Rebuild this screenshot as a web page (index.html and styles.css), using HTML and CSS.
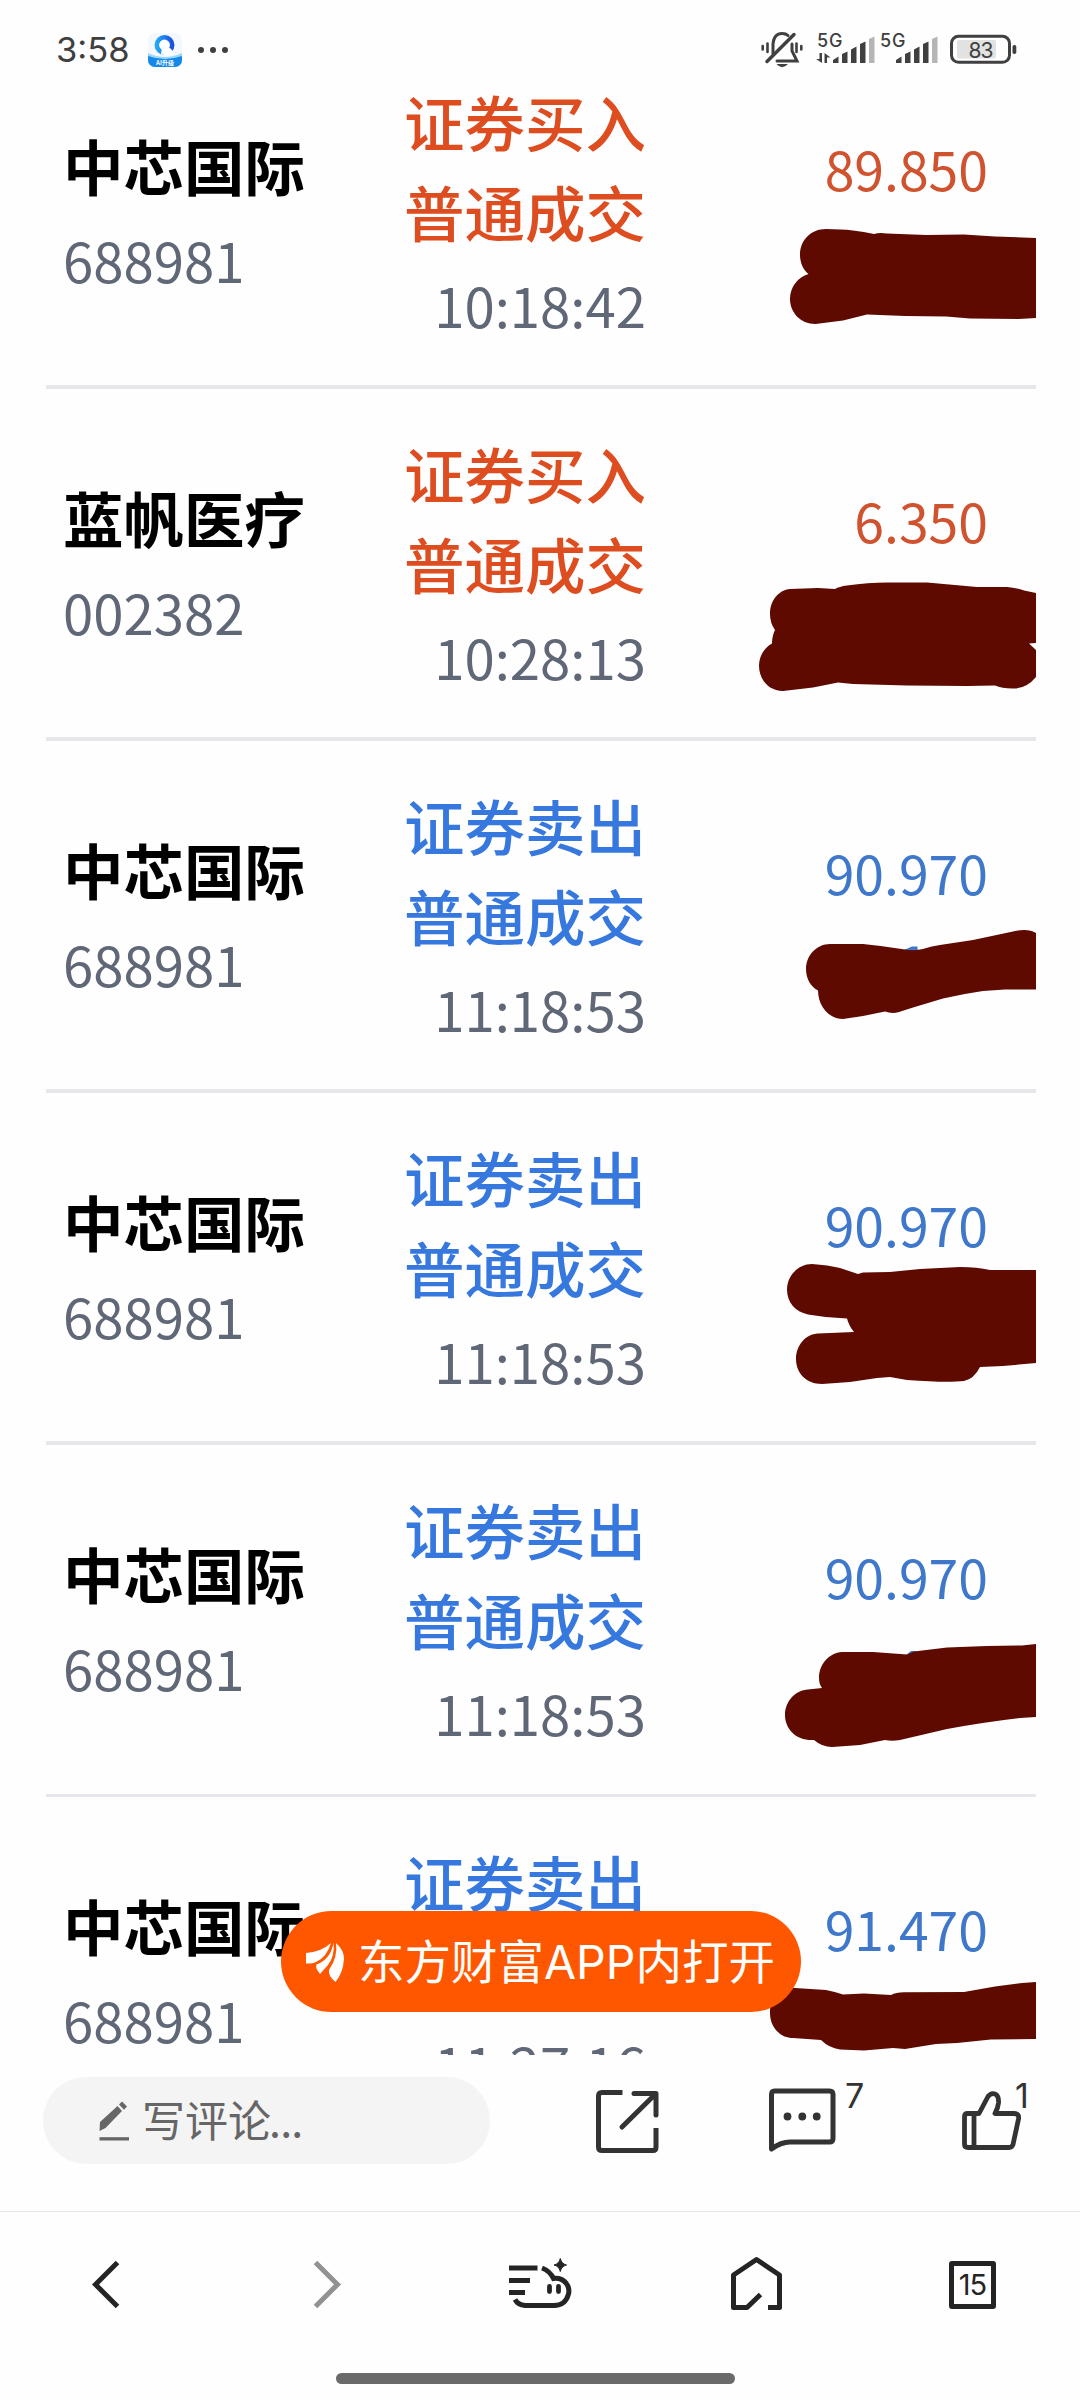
FILE: index.html
```html
<!DOCTYPE html>
<html lang="zh-CN">
<head>
<meta charset="utf-8">
<title>成交记录</title>
<link rel="stylesheet" href="styles.css">
</head>
<body>
<div class="screen">
  <header class="status">
    <span class="clock">3:58</span>
    <svg class="app-badge" viewBox="148 33 34 35" width="34" height="35">
      <defs>
        <linearGradient id="ring" x1="0" y1="0" x2="1" y2="0"><stop offset="0" stop-color="#22a7f5"/><stop offset="1" stop-color="#1b4fe0"/></linearGradient>
        <clipPath id="tile"><rect x="148" y="33" width="34" height="34" rx="7"/></clipPath>
      </defs>
      <g clip-path="url(#tile)">
        <rect x="148" y="33" width="34" height="34" fill="#f4f8fc"/>
        <path d="M148 53Q165 61 182 53V67H148Z" fill="#9bd8fb"/>
        <path d="M148 56Q165 62 182 56V67H148Z" fill="#1489ea"/>
      </g>
      <circle cx="164.500" cy="45" r="7.700" fill="#fff" stroke="url(#ring)" stroke-width="4.500"/>
      <path d="M162 47Q166 44 171 49L175 53.500Q168 57 161 54Z" fill="#fff"/>
      <text x="165" y="65" text-anchor="middle" font-size="6" font-weight="700" fill="#fff">AI升级</text>
    </svg>
    <svg class="more" viewBox="197 46 32 8" width="32" height="8"><g fill="#3f3f3f"><circle cx="201" cy="50" r="3"/><circle cx="213" cy="50" r="3"/><circle cx="225" cy="50" r="3"/></g></svg>
    <svg class="status-icons" viewBox="760 20 258 50" width="258" height="50">
      <g fill="none" stroke="#404040" stroke-width="3" stroke-linecap="round">
        <path d="M773 54V44Q774 33.500 782 33.500Q786 33.500 788 35.500M792 44V51L797 61H777"/>
        <path d="M767 61.500L794 34.500" stroke-width="3.500"/>
        <path d="M767.500 43.500V52M762.700 46V49.500M796.500 43.500V52M801.300 46V49.500" stroke-width="2.600"/>
      </g>
      <path d="M776.500 64H788Q782 70.500 776.500 64Z" fill="#404040"/>
      <g fill="#404040">
        <text class="num" x="817" y="46.500" font-size="18" font-weight="500" letter-spacing=".8">5G</text>
        <text class="num" x="880" y="46.500" font-size="18" font-weight="500" letter-spacing=".8">5G</text>
        <path d="M822 53V63L816 59H819.500V53ZM824.500 63V53L830.500 57.500H827V63Z"/>
        <path d="M833 63V60L838.500 56.500V63ZM842 63V54L847.500 51.500V63ZM851 63V49.500L856.500 46.500V63ZM860 63V44L865.500 41.500V63Z"/>
        <path d="M896 63V60L901.500 56.500V63ZM905 63V54L910.500 51.500V63ZM914 63V49.500L919.500 46.500V63ZM923 63V44L928.500 41.500V63Z"/>
        <path d="M869 63V39L874.500 36.500V63ZM932 63V39L937.500 36.500V63Z" fill="#b5b5b5"/>
        <rect x="1012.500" y="45" width="3.800" height="9" rx="1.800"/>
      </g>
      <rect x="951.500" y="36.300" width="58" height="26" rx="7" fill="none" stroke="#404040" stroke-width="3"/>
      <rect x="957" y="40" width="39" height="18.500" rx="2" fill="#e2e2e2"/>
      <text class="num" x="980.500" y="57.500" text-anchor="middle" font-size="21" letter-spacing="-1" fill="#404040">83</text>
    </svg>
  </header>

  <main class="viewport">
    <div class="trades">
      <section class="trade">
        <div class="stock"><div class="name">中芯国际</div><div class="code">688981</div></div>
        <div class="deal buy"><div class="kind">证券买入</div><div class="kind">普通成交</div><div class="time">10:18:42</div></div>
        <div class="price buy">89.850</div>
        <svg class="scribble" viewBox="46 37 990 352" width="990" height="352"><path d="M826 229Q841 229 853 230.500Q864 231.500 874 234Q879 232.500 887 233.500L926 235L964 234.500L995 236.500L1036 238V318L1019 319L970 318.500L946 316.500L905 316L867 314.500L843 320.500L815.500 324C800 324 790 312 790 299C790 287 798 277 808.500 274C803 270 800 262 800 255C800 240 811 229 826 229Z"/></svg>
      </section>
      <section class="trade">
        <div class="stock"><div class="name">蓝帆医疗</div><div class="code">002382</div></div>
        <div class="deal buy"><div class="kind">证券买入</div><div class="kind">普通成交</div><div class="time">10:28:13</div></div>
        <div class="price buy">6.350</div>
        <svg class="scribble" viewBox="46 389 990 352" width="990" height="352"><path d="M790 589L818 588L835 589Q839 586.500 847 585.500Q868 582.500 887 582.500H927L977 587H1007Q1018 588 1024 590.500L1036 593V643L1029 643.500L1036 650V677Q1027 688 1015 688.500Q1003 689 995 685.500L967 686L907 685.500L853 684L838 682.500L813 687.500L783 691C768 691 759 679 759 665.500C759 656 765 647 772 643.500Q772 636 775 630Q770 623 770 614C770 600 779 590 790 589Z"/></svg>
      </section>
      <section class="trade">
        <div class="stock"><div class="name">中芯国际</div><div class="code">688981</div></div>
        <div class="deal sell"><div class="kind">证券卖出</div><div class="kind">普通成交</div><div class="time">11:18:53</div></div>
        <div class="price sell">90.970</div>
        <svg class="scribble" viewBox="46 741 990 352" width="990" height="352"><path class="peek" d="M904 950L912 946.500H917.500V953H904Z"/><path d="M830 944H863Q884 946 905 949.500Q915 951 923 949Q932 946 940 945L973 940L1013 931.500Q1028 928 1036 933V989.500L1005 989.500L983 991Q962 994 943 998.500L913 1007.500L899 1012Q892 1014 885 1011.500L863 1016L843 1019C828 1019 818 1005 818 990.500C811 987 806 979 806 969C806 955 817 944 830 944Z"/></svg>
      </section>
      <section class="trade">
        <div class="stock"><div class="name">中芯国际</div><div class="code">688981</div></div>
        <div class="deal sell"><div class="kind">证券卖出</div><div class="kind">普通成交</div><div class="time">11:18:53</div></div>
        <div class="price sell">90.970</div>
        <svg class="scribble" viewBox="46 1093 990 352" width="990" height="352"><path d="M812 1264Q828 1265 840 1268L858 1274L863 1272.500L890 1272L920 1269L960 1267Q977 1267 990 1270H1036V1363L1003 1366L980 1367Q974 1379 964 1381Q947 1383 907 1380L890 1377L877 1378L850 1382L822 1384C806 1384 796 1373 796 1359C796 1345 806 1334 818 1333.500L854 1332Q849 1326 847 1318.500Q827 1318 808 1314.500C795 1312 787 1302 787 1289.600C787 1276 798 1264 812 1264Z"/></svg>
      </section>
      <section class="trade">
        <div class="stock"><div class="name">中芯国际</div><div class="code">688981</div></div>
        <div class="deal sell"><div class="kind">证券卖出</div><div class="kind">普通成交</div><div class="time">11:18:53</div></div>
        <div class="price sell">90.970</div>
        <svg class="scribble" viewBox="46 1445 990 352" width="990" height="352"><path class="peek" d="M906 1655L911 1651H916V1655Z"/><path d="M842 1652H873L907 1654.600L914 1651.500L947 1647.500L987 1646L1022 1645.500L1036 1644V1717L1020 1718Q985 1722 947 1729L900 1740Q892 1741.500 885 1740L860 1745L832 1747Q822 1747 814 1740C796 1741 785 1729 785 1715C785 1701 796 1690 808 1689.600L822 1688Q819 1684 819 1678C819 1664 829 1653 842 1652Z"/></svg>
      </section>
      <section class="trade">
        <div class="stock"><div class="name">中芯国际</div><div class="code">688981</div></div>
        <div class="deal sell"><div class="kind">证券卖出</div><div class="kind">普通成交</div><div class="time">11:27:16</div></div>
        <div class="price sell">91.470</div>
        <svg class="scribble" viewBox="46 1797 990 352" width="990" height="352"><path d="M790 1988L795 1988L826 1990Q836 1992 843 1994.500L864 1993.500L891 1995Q896 1992.500 904 1992.300L964 1992L995 1986.500L1022 1983L1036 1982V2039L991 2039.500L957 2043L936 2044L905 2049L893 2048L864 2050.500L840 2049.500Q829 2048 821 2040L793 2038C779 2038 770 2026 770 2013C770 1999 778 1988 790 1988Z"/></svg>
      </section>
    </div>
    <button class="open-app">
      <svg viewBox="306 1940 39 42" width="39" height="42" fill="#fff">
        <path d="M306 1952Q321 1951 331 1942Q327 1956 316 1961Q312 1963 306 1962.500Z"/>
        <path d="M333.500 1941.500Q335 1955 328 1964L320 1973Q315 1967 316.500 1963.500Q331 1958 333.500 1941.500Z"/>
        <path d="M336 1942Q344 1949 344 1958Q343 1972 335.500 1981Q328 1975 329 1969Q338 1956 336 1942Z"/>
      </svg>
      <span>东方财富APP内打开</span>
    </button>
  </main>

  <div class="actions">
    <div class="comment-box">
      <svg viewBox="98 2098 32 42" width="32" height="42" fill="#666">
        <path d="M100 2120L117.500 2104L122 2109L105.500 2126L99.500 2129Z"/><path d="M119 2102.500L122 2099.500L127 2104.500L124 2107.800Z"/><rect x="99.500" y="2135.200" width="29.500" height="3.300"/>
      </svg>
      <span>写评论<span class="dots">...</span></span>
    </div>
    <svg class="share" viewBox="594 2088 68 68" width="68" height="68" fill="none" stroke="#333" stroke-width="5">
      <path d="M622.500 2092.500H602Q598.500 2092.500 598.500 2096V2147Q598.500 2150.500 602 2150.500H653Q656 2150.500 656 2147V2128"/>
      <path d="M634 2093.500H656V2115M655 2094.500L622 2127" stroke-linecap="round" stroke-linejoin="round"/>
    </svg>
    <div class="counted talk">
      <svg viewBox="766 2086 72 68" width="72" height="68" fill="none" stroke="#333" stroke-width="5" stroke-linejoin="round">
        <path d="M774.500 2091H829.500Q833 2091 833 2094.500V2138.500Q833 2142 829.500 2142H790Q781 2142 771.500 2149V2094.500Q771.500 2091 774.500 2091Z"/>
        <g fill="#333" stroke="none"><circle cx="787.500" cy="2116.500" r="3.900"/><circle cx="802.300" cy="2116.500" r="3.900"/><circle cx="816.700" cy="2116.500" r="3.900"/></g>
      </svg>
      <span>7</span>
    </div>
    <div class="counted like">
      <svg viewBox="958 2086 66 68" width="66" height="68" fill="none" stroke="#333" stroke-width="4.800" stroke-linejoin="round">
        <path d="M967.500 2113.500H979L988 2096.500Q991.500 2092 996 2094.500Q999 2096.500 998.500 2103Q998 2108 995 2113.500H1014Q1019.500 2113.500 1018.500 2119L1013 2144.500Q1012 2147.500 1009 2147.500H968Q964.500 2147.500 964.500 2144V2117Q964.500 2113.500 967.500 2113.500ZM974 2113.500V2147.500"/>
      </svg>
      <span>1</span>
    </div>
  </div>

  <nav class="browser-nav">
    <svg viewBox="88 2254 60 60" width="60" height="60" fill="none" stroke="#242424" stroke-width="5"><path d="M117.500 2262.500L95.500 2284.500L117.500 2306.500"/></svg>
    <svg viewBox="284 2254 60 60" width="60" height="60" fill="none" stroke="#929292" stroke-width="5"><path d="M315.500 2262.500L337.500 2284.500L315.500 2306.500"/></svg>
    <svg viewBox="508 2254 64 60" width="64" height="60" fill="none" stroke="#242424" stroke-width="5">
      <path d="M509 2268H537.500M509 2280.500H530M509 2292.500H525"/>
      <path d="M542 2268Q550 2271 553.500 2278.500Q561 2277.500 566 2283Q570 2288 568.500 2294Q565.500 2305.500 554 2305.500H525Q518 2305 515 2299.500"/>
      <path d="M549.500 2286.500V2291.500M558.500 2286.500V2291.500" stroke-linecap="round" stroke-width="4.800"/>
      <path d="M560.300 2258.500Q561.500 2263.800 566.500 2265Q561.500 2266.200 560.300 2271.500Q559.100 2266.200 554 2265Q559.100 2263.800 560.300 2258.500Z" fill="#242424" stroke="#242424" stroke-width="1"/>
    </svg>
    <svg viewBox="726 2254 60 60" width="60" height="60" fill="none" stroke="#242424" stroke-width="5" stroke-linejoin="round"><path d="M760.500 2294.500L747 2307.500H733.500V2275L756.500 2259.500L779.500 2275V2307.500H768"/></svg>
    <div class="tabs">15</div>
  </nav>
  <div class="home-bar"></div>
</div>
</body>
</html>
```
FILE: styles.css
```css
* { box-sizing: border-box; }

body {
  margin: 0;
  background: #fefefe;
  font-family: "Noto Sans CJK SC", "Noto Sans", sans-serif;
}

svg { display: block; flex: none; }

.num,
.clock,
.counted,
.tabs { font-family: Inter, "Noto Sans CJK SC", sans-serif; }

.screen {
  width: 1080px;
  height: 2400px;
  display: flex;
  flex-direction: column;
  overflow: hidden;
}

.status {
  height: 88px;
  flex: none;
  display: flex;
  align-items: flex-start;
  padding-left: 56px;
  color: #3f3f3f;
}
.clock {
  width: 92px;
  margin-top: 25px;
  font-size: 34.5px;
  line-height: 50px;
}
.app-badge { margin-top: 33px; }
.more { margin: 46px 0 0 15px; }
.status-icons { margin: 20px 0 0 531px; }

.viewport {
  height: 1967px;
  flex: none;
  position: relative;
  overflow: hidden;
  padding-left: 46px;
}
.trades { margin-top: -51px; width: 990px; }

.trade {
  position: relative;
  height: 352px;
  display: grid;
  grid-template-columns: 340px 260px 342px;
  border-bottom: 4px solid #e6e7eb;
}
.trade:nth-child(5) { border-bottom-width: 3px; }

.stock { padding: 83px 0 0 17px; }
.name {
  font-size: 60.5px;
  font-weight: 700;
  line-height: 90px;
  color: #000;
}
.code {
  font-size: 54.5px;
  line-height: 100px;
  color: #606877;
}

.deal { padding-top: 39px; text-align: right; }
.kind {
  font-size: 60.5px;
  font-weight: 500;
  line-height: 90px;
}
.time {
  font-size: 54.5px;
  line-height: 97px;
  color: #606877;
}
.deal.buy { color: #dd4d20; }
.deal.sell { color: #3678de; }

.price {
  padding-top: 86px;
  font-size: 53.5px;
  line-height: 90px;
  text-align: right;
}
.price.buy { color: #d0532f; }
.price.sell { color: #3f78cb; }

.scribble {
  position: absolute;
  left: 0;
  top: 0;
  fill: #5f0a00;
}
.scribble .peek { fill: #3f78cb; }

.open-app {
  position: absolute;
  left: 281px;
  top: 1823px;
  width: 520px;
  height: 101px;
  padding: 0 0 0 25px;
  border: 0;
  border-radius: 51px;
  background: #ff5700;
  color: #fff;
  display: flex;
  align-items: center;
  gap: 13px;
  font-family: Inter, "Noto Sans CJK SC", sans-serif;
  font-size: 46.5px;
  line-height: 70px;
  white-space: nowrap;
}

.actions {
  height: 156px;
  flex: none;
  display: flex;
  align-items: flex-start;
}
.comment-box {
  width: 447px;
  height: 87px;
  margin: 22px 0 0 43px;
  padding-left: 55px;
  border-radius: 44px;
  background: #f4f4f4;
  color: #666;
  display: flex;
  align-items: center;
  gap: 12px;
  font-size: 43px;
  line-height: 60px;
}
.comment-box > span { margin-top: -5px; }
.dots { letter-spacing: -0.8px; margin-left: -2px; }
.share { margin: 33px 0 0 104px; }
.counted {
  display: flex;
  margin-top: 31px;
  font-size: 34px;
  line-height: 34px;
  color: #333;
}
.counted span { margin-top: -7px; }
.talk { width: 192px; margin-left: 104px; }
.talk span { margin-left: 7px; }
.like span { margin-left: -9px; }

.browser-nav {
  height: 146px;
  flex: none;
  display: grid;
  grid-template-columns: 196px 224px 218px 223px auto;
  align-items: start;
  padding: 42px 84px 0 88px;
  border-top: 1px solid #e7e7e7;
}
.tabs {
  width: 47px;
  height: 48px;
  margin-top: 7px;
  border: 5px solid #242424;
  border-radius: 3px;
  font-size: 29px;
  line-height: 38px;
  text-align: center;
  color: #242424;
  letter-spacing: -1px;
}

.home-bar {
  width: 399px;
  height: 11px;
  margin: 16px 0 0 336px;
  flex: none;
  border-radius: 6px;
  background: #6a6a6a;
}
```
